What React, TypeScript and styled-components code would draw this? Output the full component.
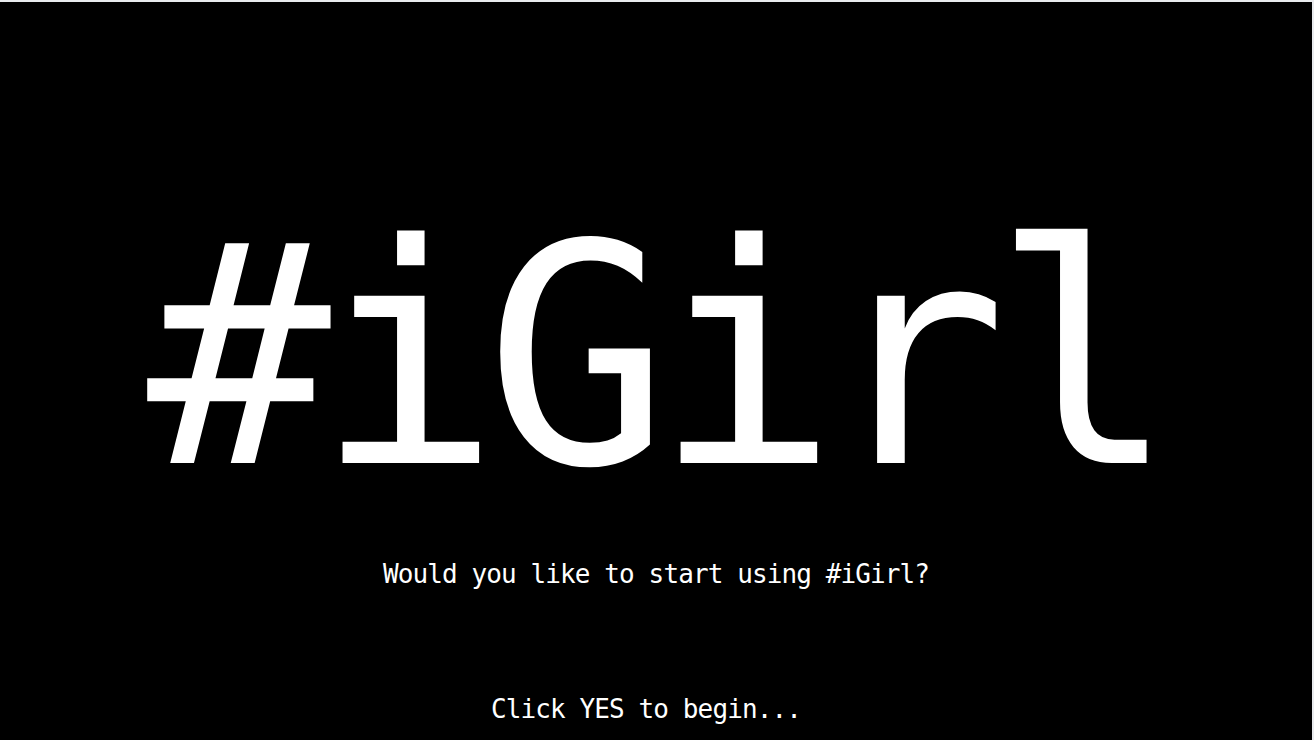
import React from "react";
import styled, { createGlobalStyle } from "styled-components";

const GlobalStyle = createGlobalStyle`
  html, body {
    margin: 0;
    padding: 0;
    background: #e9ebee;
    overflow: hidden;
  }
  body {
    font-family: "DejaVu Sans Mono", "Liberation Mono", monospace;
  }
`;

const Screen = styled.main`
  box-sizing: border-box;
  width: 1312px;
  min-height: 738px;
  margin-top: 2px;
  background: #000;
  color: #fff;
  display: flex;
  flex-direction: column;
  align-items: center;
  padding-top: 202px;
  font-family: "DejaVu Sans Mono", "Liberation Mono", monospace;
`;

const Title = styled.h1`
  margin: 0;
  font-size: 306px;
  line-height: 306px;
  font-weight: normal;
  letter-spacing: -15.2px;
  padding-right: 4px;
  white-space: nowrap;
`;

const Line = styled.p<{ $gap: number; $shift?: number }>`
  margin: ${(p) => p.$gap}px 0 0;
  font-size: 26px;
  line-height: 26px;
  letter-spacing: -0.9px;
  padding-right: ${(p) => p.$shift ?? 0}px;
  white-space: nowrap;
`;

export default function App() {
  return (
    <>
      <GlobalStyle />
      <Screen>
        <Title>#iGirl</Title>
        <Line $gap={51}>Would you like to start using #iGirl?</Line>
        <Line $gap={109} $shift={20}>Click YES to begin...</Line>
      </Screen>
    </>
  );
}
